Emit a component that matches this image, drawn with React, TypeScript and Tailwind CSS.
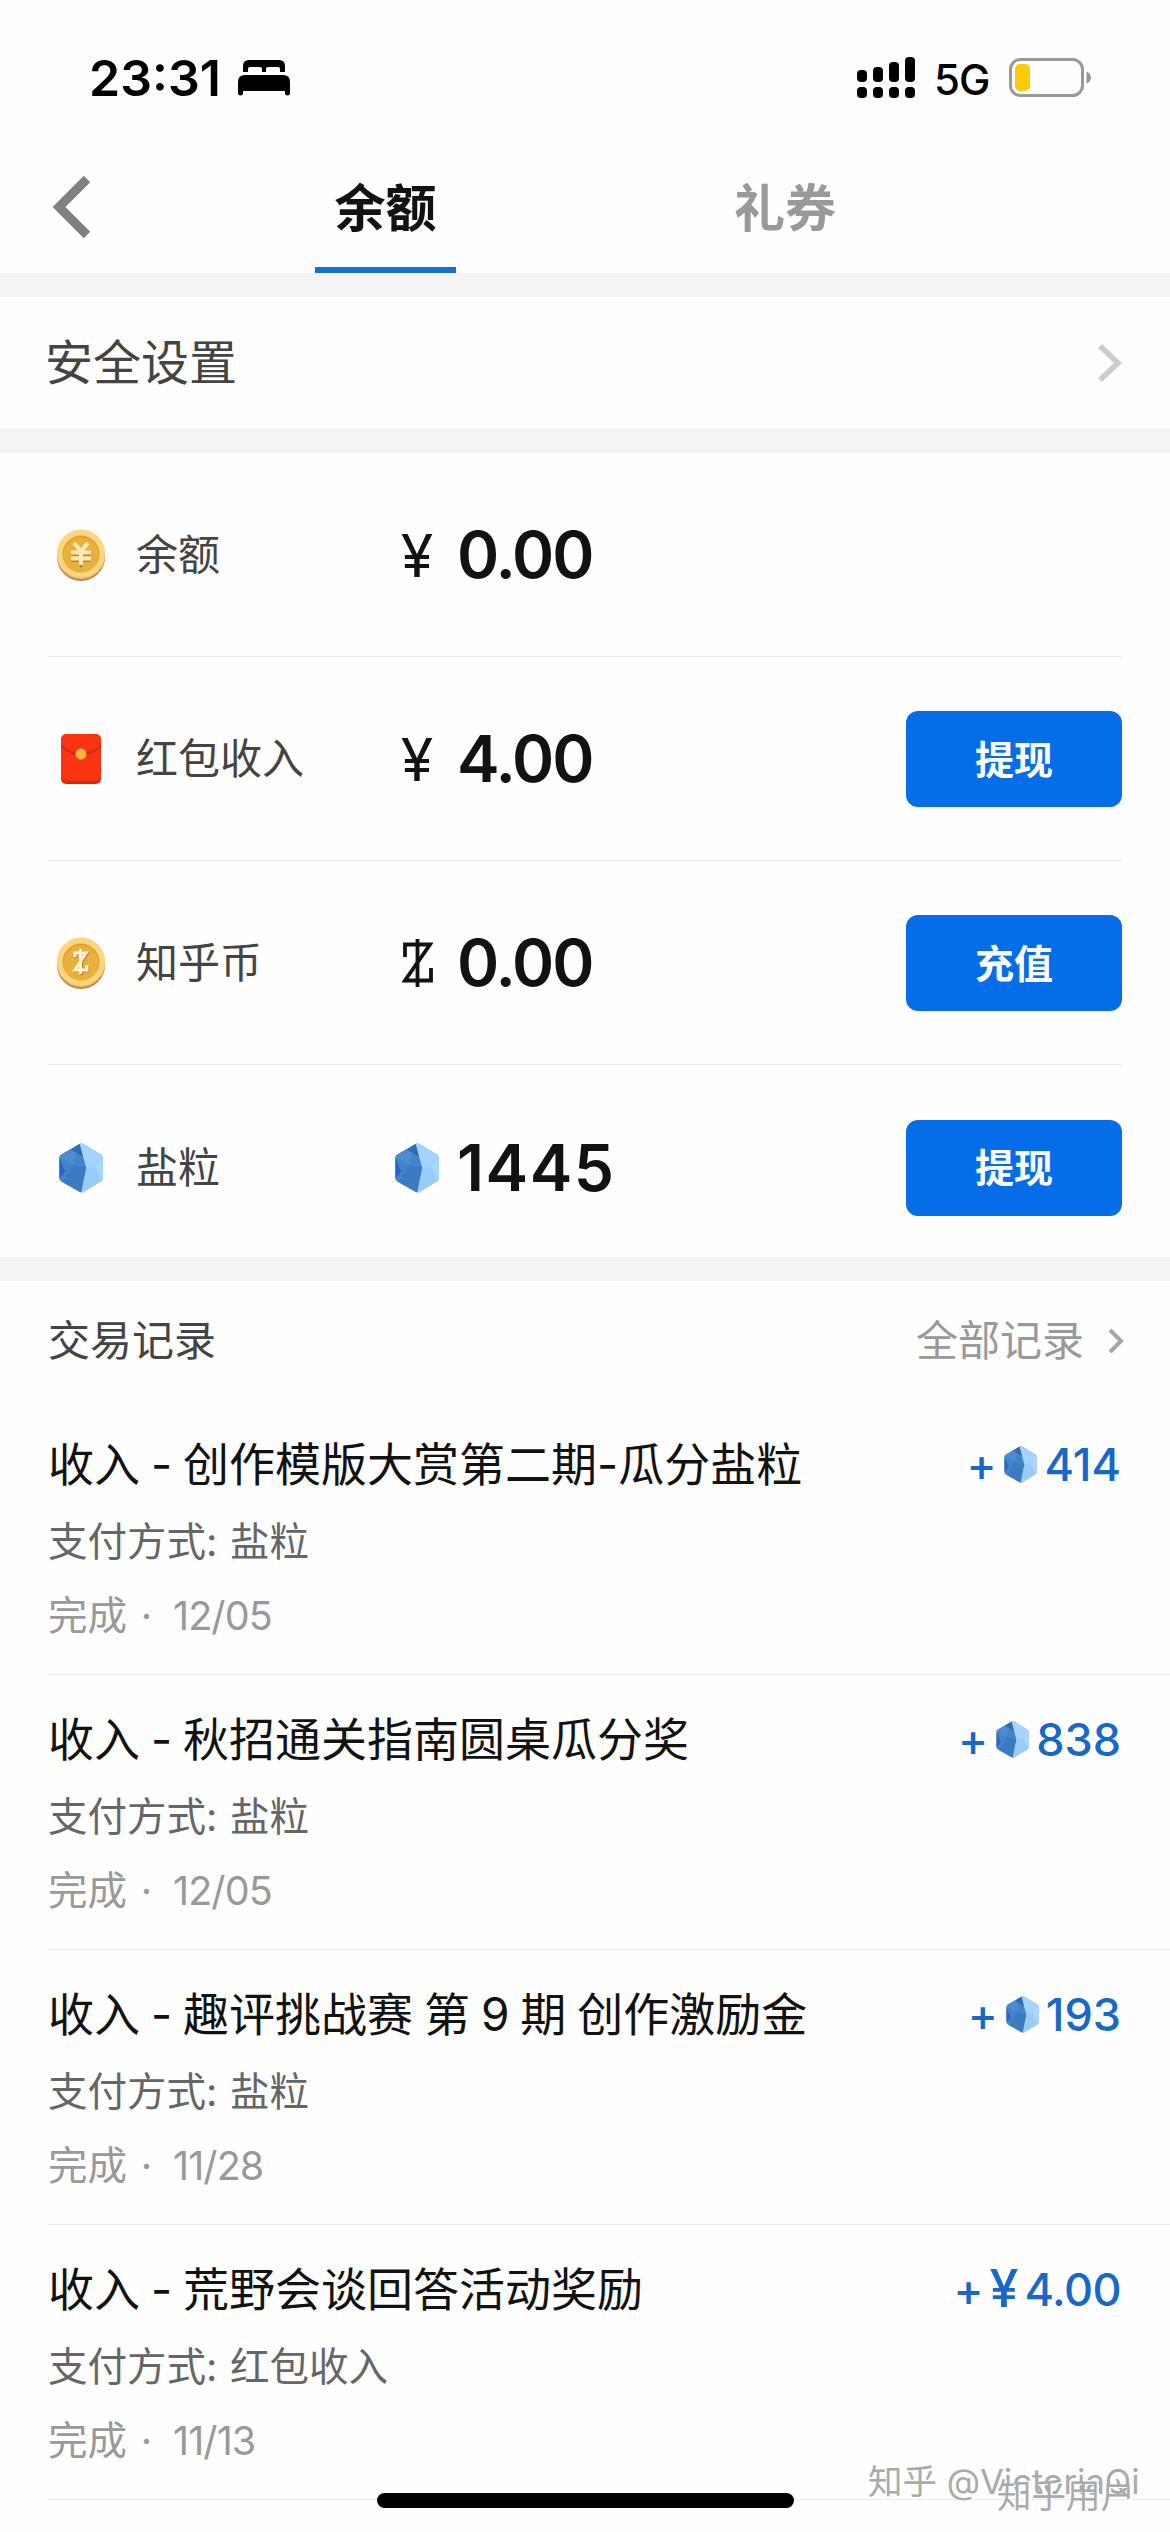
import type { ReactNode } from 'react';

const ACCOUNTS = [
  { label: '余额', icon: <YuanCoin />, unit: <Yuan />, value: '0.00' },
  { label: '红包收入', icon: <RedPacket />, unit: <Yuan />, value: '4.00', action: '提现' },
  { label: '知乎币', icon: <ZhihuCoin />, unit: <ZhihuSign />, value: '0.00', action: '充值' },
  { label: '盐粒', icon: <Crystal className="w-[44px] h-[50px]" />, unit: <Crystal className="w-[44px] h-[50px]" />, value: '1445', action: '提现' },
];

const RECORDS = [
  { title: '收入 - 创作模版大赏第二期-瓜分盐粒', method: '盐粒', date: '12/05', amount: '414', crystal: true },
  { title: '收入 - 秋招通关指南圆桌瓜分奖', method: '盐粒', date: '12/05', amount: '838', crystal: true },
  { title: '收入 - 趣评挑战赛 第 9 期 创作激励金', method: '盐粒', date: '11/28', amount: '193', crystal: true },
  { title: '收入 - 荒野会谈回答活动奖励', method: '红包收入', date: '11/13', amount: '4.00', crystal: false },
];

export default function App() {
  return (
    <div
      lang="zh-CN"
      className="relative flex flex-col w-[1170px] h-[2532px] overflow-hidden bg-[#fefefe] whitespace-nowrap font-['Inter','Noto_Sans_CJK_SC',sans-serif]"
    >
      <StatusBar />
      <Tabs />
      <Band />
      <div className="flex items-center justify-between h-[132px] pl-[45px] pr-[47px] shrink-0">
        <span className="text-[48px] leading-none text-[#444]">安全设置</span>
        <svg className="w-[26px] h-[40px]" viewBox="0 0 26 40" fill="none" stroke="#cccccc" strokeWidth="5.500">
          <path d="M3 3L21 20L3 37" />
        </svg>
      </div>
      <Band />
      <div className="flex flex-col h-[804px] px-12 shrink-0">
        {ACCOUNTS.map((item) => (
          <AccountRow key={item.label} {...item} />
        ))}
      </div>
      <Band />
      <div className="flex items-center justify-between h-[120px] pl-12 pr-[46px] -mb-px shrink-0">
        <span className="text-[42px] leading-none text-[#444]">交易记录</span>
        <div className="flex items-center gap-6">
          <span className="text-[42px] leading-none text-[#999]">全部记录</span>
          <svg className="w-[16px] h-[26px]" viewBox="0 0 16 26" fill="none" stroke="#a5a5b0" strokeWidth="4">
            <path d="M2 2L13 13L2 24" />
          </svg>
        </div>
      </div>
      <div className="flex flex-col pl-12 shrink-0">
        {RECORDS.map((record) => (
          <RecordItem key={record.title} {...record} />
        ))}
      </div>
      <div className="absolute left-[377px] top-[2493px] w-[417px] h-[15px] rounded-full bg-black" />
      <Watermark />
    </div>
  );
}

function Band() {
  return <div className="h-6 bg-[#f4f4f4] shrink-0" />;
}

function StatusBar() {
  return (
    <div className="flex items-center justify-between h-[156px] pl-[89px] pr-[78px] shrink-0">
      <div className="flex items-center gap-[17px]">
        <span className="text-[50px] leading-none font-semibold text-black">23:31</span>
        <svg className="w-[52px] h-[36px]" viewBox="0 0 52 36" fill="#000">
          <path d="M5 12V6Q5 0 11 0H41Q47 0 47 6V12H42V9Q42 7 40 7H30Q28 7 28 9V12H24V9Q24 7 22 7H12Q10 7 10 9V12Z" />
          <path d="M0 22Q0 15 7 15H45Q52 15 52 22V33Q52 35.500 49.500 35.500Q47 35.500 47 33V31H5V33Q5 35.500 2.500 35.500Q0 35.500 0 33Z" />
        </svg>
      </div>
      <div className="flex items-center">
        <svg className="w-[58px] h-[42px]" viewBox="0 0 58 42" fill="#000">
          <rect x="0" y="13" width="10" height="12" rx="4" />
          <rect x="16" y="10" width="10" height="15" rx="4" />
          <rect x="32" y="5" width="10" height="20" rx="4" />
          <rect x="48" y="0" width="10" height="25" rx="4" />
          <rect x="0" y="30" width="10" height="11" rx="4" />
          <rect x="16" y="30" width="10" height="11" rx="4" />
          <rect x="32" y="30" width="10" height="11" rx="4" />
          <rect x="48" y="30" width="10" height="11" rx="4" />
        </svg>
        <span className="ml-[19px] mt-1 w-[56px] text-[42px] leading-none font-medium tracking-[-1px] text-black">5G</span>
        <svg className="ml-[19px] w-[83px] h-[40px]" viewBox="0 0 83 40">
          <rect x="1.500" y="1.500" width="72" height="36" rx="10" fill="none" stroke="#999" strokeWidth="3" />
          <rect x="6" y="6" width="15" height="27" rx="5" fill="#fccb05" />
          <path d="M77.500 13.500Q82 15.500 82 19.500Q82 23.500 77.500 25.500Z" fill="#999" />
        </svg>
      </div>
    </div>
  );
}

function Tabs() {
  return (
    <div className="flex h-[117px] pl-[50px] shrink-0">
      <svg className="mt-[19px] w-[42px] h-[64px]" viewBox="0 0 42 64" fill="none" stroke="#808080" strokeWidth="9">
        <path d="M37 4L9 32L37 60" />
      </svg>
      <div className="flex flex-col items-center justify-between w-[141px] ml-[223px] pt-[27px]">
        <span className="text-[51px] leading-none font-bold text-[#121212]">余额</span>
        <div className="w-full h-[6px] bg-[#1272cc]" />
      </div>
      <span className="ml-[278px] pt-[27px] text-[51px] leading-none font-bold text-[#999]">礼券</span>
    </div>
  );
}

interface AccountRowProps {
  label: string;
  icon: ReactNode;
  unit: ReactNode;
  value: string;
  action?: string;
}

function AccountRow({ label, icon, unit, value, action }: AccountRowProps) {
  const tracking = value.includes('.') ? 'tracking-[-2px]' : 'tracking-[1.5px]';
  return (
    <div className="flex items-center h-[204px] pt-px border-b border-[#ebebeb] last:border-b-0 shrink-0">
      <div className="flex justify-center w-[66px]">{icon}</div>
      <span className="w-[236px] pl-[22px] text-[42px] leading-none text-[#444]">{label}</span>
      <div className="flex justify-center w-[44px] mr-[18px] ml-[45px]">{unit}</div>
      <span className={`text-[64px] leading-none font-semibold text-[#121212] ${tracking}`}>{value}</span>
      {action && (
        <button className="ml-auto w-[216px] h-[96px] rounded-[12px] bg-[#056de8] text-[39px] leading-none font-bold text-white">
          {action}
        </button>
      )}
    </div>
  );
}

interface RecordItemProps {
  title: string;
  method: string;
  date: string;
  amount: string;
  crystal: boolean;
}

function RecordItem({ title, method, date, amount, crystal }: RecordItemProps) {
  return (
    <div className="h-[275px] pt-[41px] border-b border-[#ebebeb]">
      <div className="flex items-center justify-between h-[46px] pr-[49px]">
        <span className="text-[46px] leading-none text-[#121212] [word-spacing:-2px]">{title}</span>
        <div className="flex items-center text-[45px] leading-none font-medium text-[#1768c8]">
          <span>+</span>
          {crystal ? (
            <Crystal className="w-[33px] h-[37px] ml-[8px] mr-[7px]" />
          ) : (
            <span className="mx-[6px] text-[52px]">¥</span>
          )}
          <span className={crystal ? '' : 'tracking-[-0.5px]'}>{amount}</span>
        </div>
      </div>
      <div className="mt-[35px] text-[39.5px] leading-[40px] text-[#666] [word-spacing:1.5px]">支付方式: {method}</div>
      <div className="flex mt-[34px] text-[39.5px] leading-[40px] text-[#999]">
        <span>完成</span>
        <span className="w-[46px] pr-[7px] text-center">·</span>
        <span className="tracking-[-0.9px]">{date}</span>
      </div>
    </div>
  );
}

function Yuan() {
  return <span className="text-[59px] leading-none text-[#121212]">¥</span>;
}

function ZhihuSign() {
  return (
    <svg className="w-[31px] h-[50px]" viewBox="0 0 31 50" fill="none" stroke="#121212" strokeWidth="3.800">
      <path d="M3 19V6.500H28L3 42.500H29V30" />
      <path d="M15.500 1V49" />
    </svg>
  );
}

function CoinBase() {
  return (
    <>
      <circle cx="25" cy="28" r="24" fill="#b98a52" />
      <circle cx="25" cy="26" r="24" fill="#f3b963" />
      <circle cx="25" cy="24.500" r="24" fill="#fcd57e" />
      <circle cx="25" cy="25" r="18.500" fill="#e0a030" />
      <circle cx="25" cy="26" r="17.500" fill="#e9b13b" />
    </>
  );
}

function YuanCoin() {
  return (
    <svg className="w-[50px] h-[53px]" viewBox="0 0 50 53">
      <CoinBase />
      <path d="M15 25.500H35M15 31.500H35" stroke="#c08534" strokeWidth="3" />
      <path d="M18 14L25 22L32 14M25 22V36M15 23.500H35M15 29.500H35" fill="none" stroke="#fdeab8" strokeWidth="4" />
      <path d="M23 36H27L25 39Z" fill="#b9782c" />
    </svg>
  );
}

function ZhihuCoin() {
  return (
    <svg className="w-[50px] h-[53px]" viewBox="0 0 50 53">
      <CoinBase />
      <path d="M20 21V17H31L20 34H32V29M25.500 13V38" fill="none" stroke="#c08534" strokeWidth="3" />
      <path d="M19 20V16H30L19 33H31V28M24.500 12V37" fill="none" stroke="#fff5d8" strokeWidth="3" />
    </svg>
  );
}

function RedPacket() {
  return (
    <svg className="w-[40px] h-[50px]" viewBox="0 0 40 50">
      <rect x="0" y="1" width="40" height="49" rx="5" fill="#d8270f" />
      <rect x="0" y="0" width="40" height="47" rx="5" fill="#fa3412" />
      <path d="M0 11Q20 27 40 11V13.500Q20 29.500 0 13.500Z" fill="#d12a10" />
      <circle cx="20" cy="20" r="5.500" fill="#fcb73a" />
    </svg>
  );
}

function Crystal({ className }: { className: string }) {
  return (
    <svg className={`${className} shrink-0`} viewBox="0 0 45 52">
      <path d="M21 1Q23 0 25 1L43 12Q45 13 45 15V37Q45 39 43 40L25 51Q23 52 21 51L2 40Q0 39 0 37V15Q0 13 2 12Z" fill="#4284cb" />
      <path d="M21 1Q23 0 25 1L43 12Q45 13 45 15V37Q45 39 43 40L25 51Q24 52 23 51.500L28 26Z" fill="#a4d3fc" />
      <path d="M21 1L14 22L0 15Q0 13 2 12Z" fill="#4a8dd6" />
      <path d="M21 1L12 7L24.500 14Z" fill="#2f6bb2" />
      <path d="M0 15L6 30L0 37Z" fill="#2f64c0" />
      <path d="M14 23L28 26L22 51L4 41Z" fill="#3b7cc0" />
      <path d="M28 26L37 24L44 39L28 48L24 46Z" fill="#9bcbf8" />
      <path d="M37 24L45 14V37Z" fill="#add8fb" />
    </svg>
  );
}

function Watermark() {
  return (
    <div className="absolute left-[868px] top-[2465px] text-[34.5px] leading-none text-[#aaa] [text-shadow:2px_1px_0_#fff]">
      <div>知乎 @VictoriaQi</div>
      <div className="absolute left-[129px] top-[14px]">知乎用户</div>
    </div>
  );
}
